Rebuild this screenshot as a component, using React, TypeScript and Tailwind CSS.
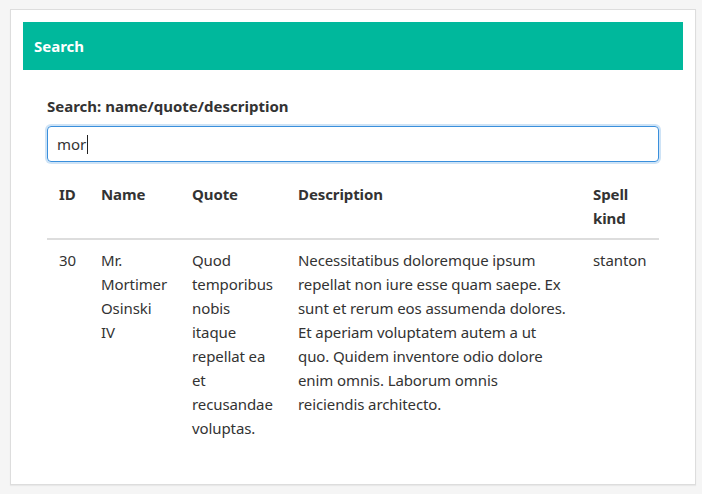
import React from 'react';

const rows = [
  {
    id: 30,
    name: 'Mr. Mortimer Osinski IV',
    quote: 'Quod temporibus nobis itaque repellat ea et recusandae voluptas.',
    description:
      'Necessitatibus doloremque ipsum repellat non iure esse quam saepe. Ex sunt et rerum eos assumenda dolores. Et aperiam voluptatem autem a ut quo. Quidem inventore odio dolore enim omnis. Laborum omnis reiciendis architecto.',
    kind: 'stanton',
  },
];

export default function App() {
  return (
    <div className="min-h-[494px] bg-[#f5f5f5] pt-[9px] px-[7px] pb-[9px] font-['Noto_Sans',sans-serif] text-[#333]">
      <div className="ml-[3px] w-[686px] bg-white border border-[#dddddd] shadow-[0_1px_1px_rgba(0,0,0,0.05)] p-3 h-[476px]">
        {/* Header */}
        <div className="h-12 bg-[#00b89c] flex items-center px-[11px]">
          <span className="text-white font-bold text-[15px]">Search</span>
        </div>

        <div className="px-6 pt-[25px]">
          <label className="block font-bold text-[15px] leading-[22px] mb-[9px]">
            Search: name/quote/description
          </label>
          <div className="h-9 rounded-[4px] border border-[#3a8fdc] shadow-[0_0_0_2px_rgba(59,143,220,0.25)] flex items-center pl-[9px] text-[15px]">
            <span>mor</span>
            <span className="w-px h-[19px] bg-[#222] ml-[1px]" />
          </div>

          <table className="mt-3 w-full border-collapse text-[15px] leading-6 table-fixed tracking-[-0.1px]">
            <colgroup>
              <col className="w-[42px]" />
              <col className="w-[91px]" />
              <col className="w-[106px]" />
              <col className="w-[295px]" />
              <col className="w-[78px]" />
            </colgroup>
            <thead>
              <tr className="border-b-2 border-[#dddddd]">
                <th className="text-left align-top font-bold px-3 py-2">ID</th>
                <th className="text-left align-top font-bold px-3 py-2">Name</th>
                <th className="text-left align-top font-bold px-3 py-2">Quote</th>
                <th className="text-left align-top font-bold px-3 py-2">Description</th>
                <th className="text-left align-top font-bold px-3 py-2">Spell kind</th>
              </tr>
            </thead>
            <tbody>
              {rows.map((r) => (
                <tr key={r.id}>
                  <td className="align-top px-3 pt-2 pb-2">{r.id}</td>
                  <td className="align-top px-3 pt-2 pb-2">{r.name}</td>
                  <td className="align-top px-3 pt-2 pb-2">{r.quote}</td>
                  <td className="align-top pl-3 pr-[14px] pt-2 pb-2">{r.description}</td>
                  <td className="align-top px-3 pt-2 pb-2">{r.kind}</td>
                </tr>
              ))}
            </tbody>
          </table>
        </div>
      </div>
    </div>
  );
}
